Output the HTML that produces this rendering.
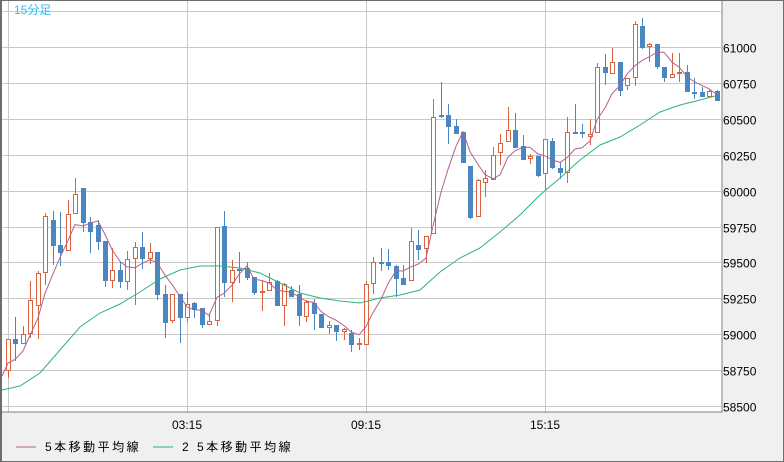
<!DOCTYPE html>
<html><head><meta charset="utf-8"><style>
html,body{margin:0;padding:0;}
body{width:784px;height:462px;overflow:hidden;background:#f0f0f0;font-family:"Liberation Sans","Noto Sans CJK JP",sans-serif;}
svg{display:block;}
</style></head><body>
<svg id="c" width="784" height="462" xmlns="http://www.w3.org/2000/svg">
<rect x="0" y="0" width="784" height="462" fill="#f0f0f0"/>
<rect x="1" y="1" width="721" height="411" fill="#ffffff"/>
<g id="grid" stroke="#c8c8c8" stroke-width="1"></g>
<g id="cd"></g>
<polyline id="ma25" fill="none" stroke="#2db37a" stroke-width="1"/>
<polyline id="ma5" fill="none" stroke="#b5608a" stroke-width="1"/>
<rect x="1.5" y="0.5" width="720.5" height="411.5" fill="none" stroke="#808080" stroke-width="1"/>
<rect x="0.5" y="0.5" width="783" height="461" fill="none" stroke="#6e6e6a" stroke-width="1"/>
<line x1="1" y1="0" x2="1" y2="462" stroke="#6e6e6a" stroke-width="2"/>
<text x="14" y="14" font-size="12" fill="#33bbee">15分足</text>
<g id="yl" font-size="12" fill="#000"></g>
<g font-size="12" fill="#000" text-anchor="middle">
<text x="187" y="429">03:15</text>
<text x="366" y="429">09:15</text>
<text x="545" y="429">15:15</text>
</g>
<line x1="16" y1="447" x2="36" y2="447" stroke="#b5608a"/>
<text x="45" y="451" font-size="12" fill="#000" letter-spacing="2.5">5本移動平均線</text>
<line x1="153" y1="447" x2="173" y2="447" stroke="#2db37a"/>
<text x="182" y="451" font-size="12" fill="#000" letter-spacing="2.5">2 5本移動平均線</text>
</svg>
<script>
var NS="http://www.w3.org/2000/svg";
function el(t,a,p){var e=document.createElementNS(NS,t);for(var k in a)e.setAttribute(k,a[k]);p.appendChild(e);return e;}
var g=document.getElementById('grid'),yl=document.getElementById('yl');
var labels=["61000","60750","60500","60250","60000","59750","59500","59250","59000","58750","58500"];
el('line',{x1:2,y1:11.5,x2:721,y2:11.5},g);
for(var i=0;i<11;i++){var y=Math.round(47+i*35.9)+0.5;el('line',{x1:2,y1:y,x2:721,y2:y},g);
var t=el('text',{x:723,y:y+5},yl);t.textContent=labels[i];}
[8,187,366,545].forEach(function(x){el('line',{x1:x+0.5,y1:1,x2:x+0.5,y2:412},g);});
// [open,close,high,low] in px
var D=[[371,339,339,378],[339,344,317,361],[344,334,326,344],[334,300,281,338],[306,273,271,339],[273,216,213,285],[220,246,211,265],[245,253,212,266],[251,214,200,251],[214,194,178,214],
[188,223,188,232],[222,232,217,253],[225,242,220,250],[241,281,241,287],[281,270,248,288],[270,282,262,288],[282,259,251,290],[259,247,242,305],[247,259,232,269],[259,252,243,264],
[252,295,252,300],[294,323,285,338],[321,294,294,323],[294,318,294,343],[318,304,292,322],[303,310,302,318],[308,325,308,328],[325,321,313,325],[321,227,227,326],[226,283,211,297],
[283,270,260,302],[269,271,252,283],[268,278,262,280],[277,293,277,295],[292,291,281,311],[291,282,273,291],[281,306,280,306],[306,284,283,326],[290,297,286,297],[294,316,285,326],
[317,302,300,322],[303,314,299,330],[314,328,314,328],[328,325,321,334],[325,332,325,341],[332,329,328,340],[333,345,330,352],[345,343,338,350],[345,284,281,345],[284,262,257,294],
[262,263,248,271],[262,266,249,270],[266,279,265,297],[278,285,265,285],[281,241,228,281],[245,250,230,260],[249,236,236,263],[234,117,99,234],[115,117,82,118],[115,127,104,144],
[126,134,119,134],[132,163,132,163],[166,218,166,219],[217,180,179,217],[183,178,170,197],[180,155,147,180],[153,143,134,165],[142,130,107,142],[130,148,113,148],[146,160,135,160],
[159,156,154,164],[156,176,156,177],[174,139,139,190],[141,168,138,169],[168,173,162,179],[173,132,117,183],[132,133,104,134],[132,133,124,138],[137,134,119,145],[133,67,63,133],
[67,73,54,85],[74,62,48,74],[62,91,62,96],[86,78,78,90],[78,24,21,86],[26,48,18,49],[47,44,43,62],[44,67,44,69],[67,78,67,82],[78,74,53,78],
[73,72,53,82],[72,92,65,92],[92,92,78,99],[92,97,87,97],[97,91,90,97],[91,101,90,101]];
var cd=document.getElementById('cd');var sp=179/24;var cl=[];
D.forEach(function(c,i){var x=Math.round(8+i*sp);var o=c[0],cc=c[1],h=c[2],l=c[3];cl.push(cc);
var up=cc<o;var top=Math.min(o,cc),bot=Math.max(o,cc);
var col=up?"#d9623f":"#4a86c0";
el('line',{x1:x+0.5,y1:h,x2:x+0.5,y2:l,stroke:col},cd);
if(up){el('rect',{x:x-2+0.5,y:top+0.5,width:4,height:Math.max(bot-top-1,1),fill:"#fff",stroke:col},cd);}
else{el('rect',{x:x-2,y:top,width:5,height:Math.max(bot-top,2),fill:col},cd);}
});
var p=[];for(var i=0;i<cl.length;i++){var s=0,n=0;for(var j=Math.max(0,i-4);j<=i;j++){s+=cl[j];n++;}
var v=s/n;if(i<4)v=v+(4-i)*6;p.push(Math.round(8+i*sp)+","+v.toFixed(1));}
p.unshift("2,376");
document.getElementById('ma5').setAttribute('points',p.join(' '));
var m=[[2,390],[20,386],[40,373],[60,350],[80,327],[100,313],[120,304],[140,292],[160,279],[180,270],[200,266],[220,266],[240,268],[260,273],[280,283],[300,293],[320,298],[340,301],[360,303],[380,298],[400,295],[420,290],[440,272],[460,258],[480,248],[500,232],[520,215],[540,195],[560,178],[580,160],[600,145],[620,137],[640,125],[660,112],[680,105],[700,100],[715,96]];
document.getElementById('ma25').setAttribute('points',m.map(function(a){return a.join(',')}).join(' '));
</script>
</body></html>
